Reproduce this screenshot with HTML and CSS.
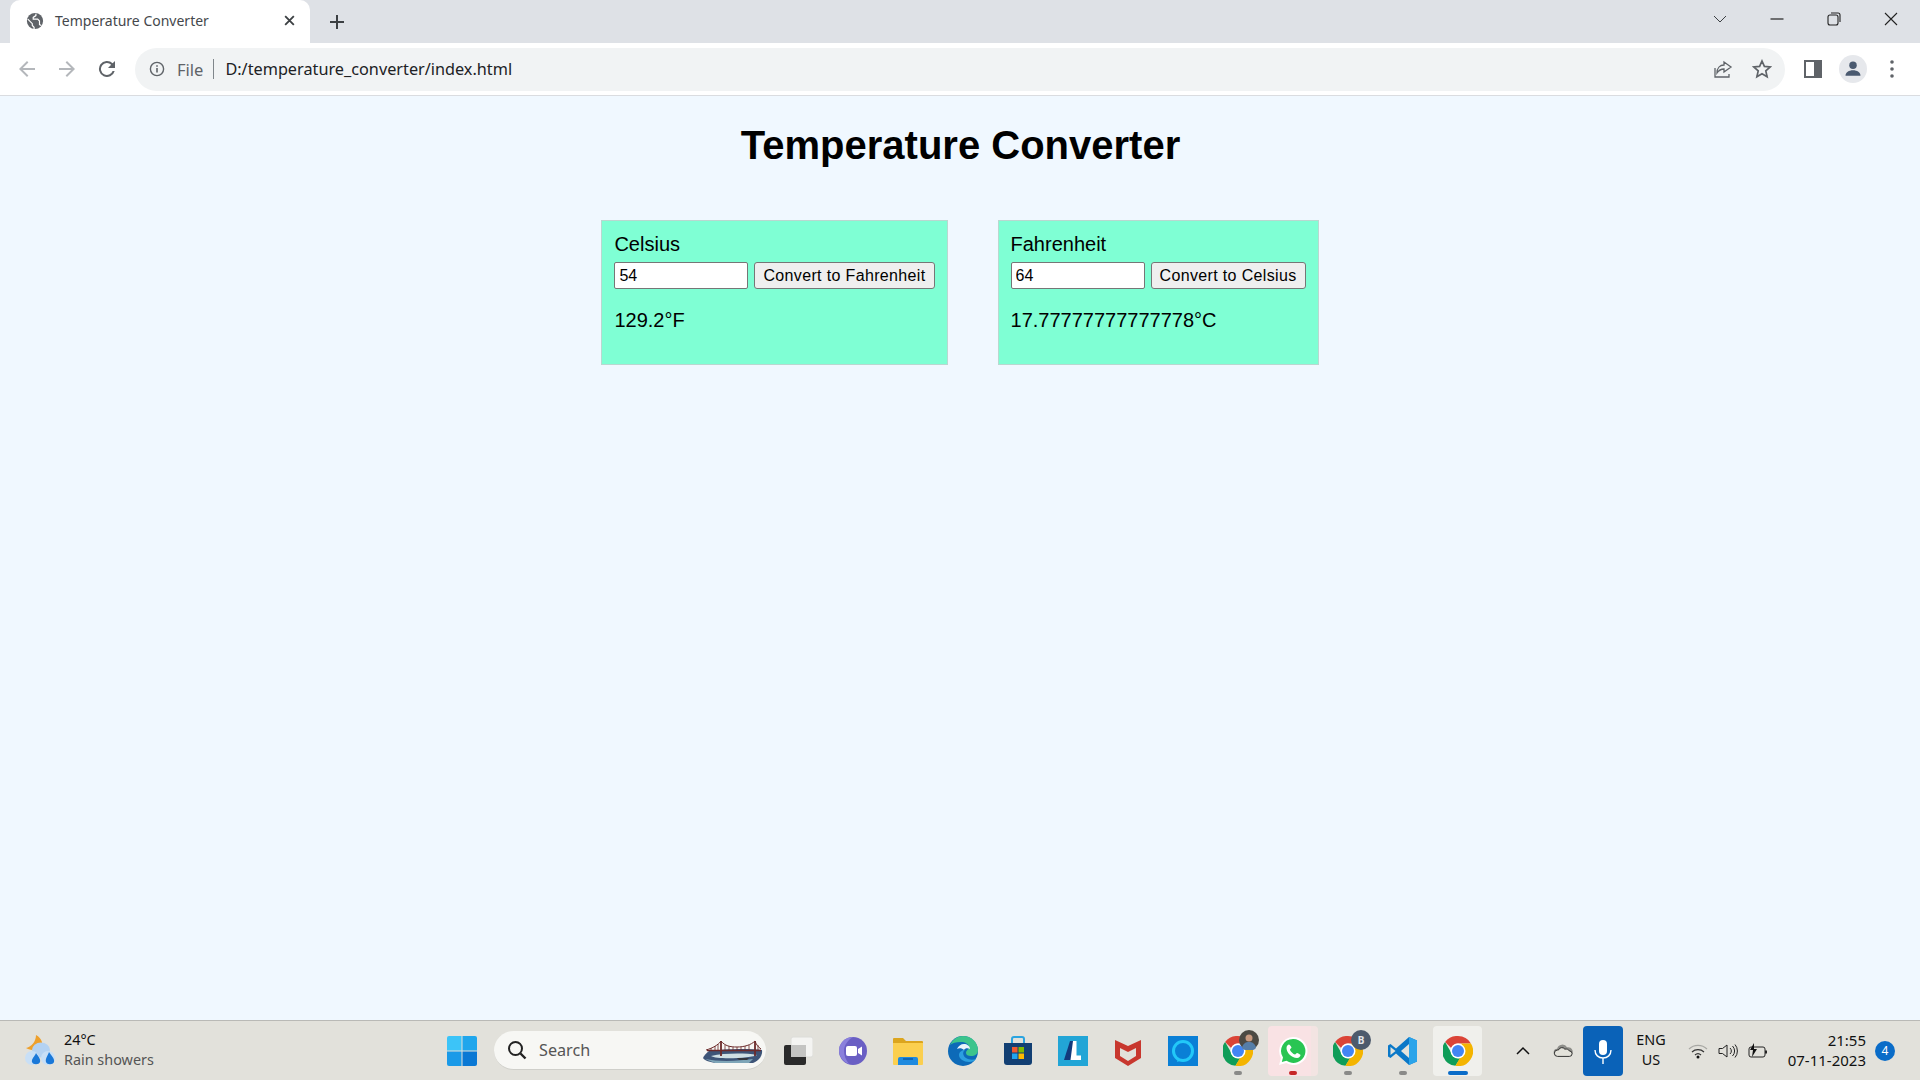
FILE: index.html
```html
<!DOCTYPE html>
<html lang="en">
  <head>
    <meta charset="UTF-8" />
    <title>Temperature Converter</title>
    <link rel="stylesheet" href="styles.css">
  </head>
  <body>
    <svg class="defs" width="0" height="0">
      <symbol id="chrome" viewBox="4 4 40 40">
        <path d="M24 4a20 20 0 0 1 17.300 10H24a10 10 0 0 0-9.200 6L6.800 12A20 20 0 0 1 24 4z" fill="#db4437"/>
        <path d="M6.800 12l8.600 15a10 10 0 0 0 11.700 6.500L20.600 43.800A20 20 0 0 1 6.800 12z" fill="#0f9d58"/>
        <path d="M41.300 14A20 20 0 0 1 20.600 43.800l8.600-15a10 10 0 0 0 .8-10.800L28 14z" fill="#f4b400"/>
        <circle cx="24" cy="24" r="10" fill="#fff"/>
        <circle cx="24" cy="24" r="8" fill="#4285f4"/>
      </symbol>
    </svg>

    <div class="tabbar">
      <div class="tab">
        <svg class="favicon" viewBox="0 0 20 20">
          <circle cx="10" cy="10" r="9" fill="#5f6368"/>
          <path d="M2 8l5 5v2l2 2v2M11 2v2L8 6v2h5l2 2v4l2 1" stroke="#fff" stroke-width="1.300" fill="none"/>
        </svg>
        <span class="tab-title">Temperature Converter</span>
        <svg class="tab-close" viewBox="0 0 12 12"><path d="M2 2l8 8M10 2l-8 8" stroke="#3c4043" stroke-width="1.700" fill="none"/></svg>
      </div>
      <svg class="new-tab" viewBox="0 0 16 16"><path d="M8 1v14M1 8h14" stroke="#3c4043" stroke-width="2" fill="none"/></svg>
      <div class="window-btns">
        <svg class="win-ico" viewBox="0 0 16 16"><path d="M2 5l6 6 6-6" stroke="#3c4043" fill="none"/></svg>
        <svg class="win-ico" viewBox="0 0 16 16"><path d="M1.500 8h13" stroke="#222" stroke-width="1.200" fill="none"/></svg>
        <svg class="win-ico" viewBox="0 0 16 16"><rect x="2" y="4" width="10" height="10" rx="2" stroke="#222" stroke-width="1.100" fill="none"/><path d="M5 2h7a2 2 0 0 1 2 2v7" stroke="#222" stroke-width="1.100" fill="none"/></svg>
        <svg class="win-ico" viewBox="0 0 16 16"><path d="M2 2l12 12M14 2L2 14" stroke="#222" stroke-width="1.100" fill="none"/></svg>
      </div>
    </div>

    <div class="toolbar">
      <svg class="nav-ico" viewBox="0 0 24 24"><path fill="#b4b7bb" d="M20 11H7.800l5.600-5.600L12 4l-8 8 8 8 1.400-1.400L7.800 13H20z"/></svg>
      <svg class="nav-ico" viewBox="0 0 24 24"><path fill="#b4b7bb" d="M4 11h12.200l-5.600-5.600L12 4l8 8-8 8-1.400-1.400 5.600-5.600H4z"/></svg>
      <svg class="nav-ico" viewBox="0 0 24 24"><path fill="#5f6368" d="M17.650 6.350A8 8 0 1 0 19.700 14h-2.100a6 6 0 1 1-1.400-6.200L13 11h7V4z"/></svg>
      <div class="omnibox">
        <svg class="info-ico" viewBox="0 0 16 16"><circle cx="8" cy="8" r="6.600" stroke="#5f6368" stroke-width="1.400" fill="none"/><path d="M8 7v4.500M8 4.300v1.500" stroke="#5f6368" stroke-width="1.600"/></svg>
        <span class="scheme">File</span>
        <span class="divider"></span>
        <span class="url">D:/temperature_converter/index.html</span>
        <svg class="omni-ico share" viewBox="0 0 20 20"><path d="M2 9v9h14v-3" stroke="#5f6368" stroke-width="1.300" fill="none"/><path d="M11 3l7 5-7 5v-3c-3 0-5 1-7 4 0-5 3-8 7-8z" stroke="#5f6368" stroke-width="1.300" fill="none"/></svg>
        <svg class="omni-ico" viewBox="0 0 20 20"><path d="M10 2l2.400 5.400 5.800.6-4.400 3.900 1.300 5.800-5.100-3-5.100 3 1.300-5.800L1.800 8l5.800-.6z" stroke="#5f6368" stroke-width="1.700" fill="none"/></svg>
      </div>
      <svg class="side-ico" viewBox="0 0 18 18"><path fill="#5f6368" d="M0 0h18v18H0z"/><path fill="#fff" d="M2 2h8v14H2z"/></svg>
      <div class="avatar">
        <svg viewBox="0 0 24 24"><circle cx="12" cy="7.500" r="4.500" fill="#4a5a70"/><path d="M3 20c0-4 4-6.500 9-6.500s9 2.500 9 6.500z" fill="#4a5a70"/></svg>
      </div>
      <svg class="menu-ico" viewBox="0 0 6 20"><circle cx="3" cy="3" r="1.800" fill="#5f6368"/><circle cx="3" cy="10" r="1.800" fill="#5f6368"/><circle cx="3" cy="17" r="1.800" fill="#5f6368"/></svg>
    </div>

    <main class="page">
      <h1>Temperature Converter</h1>
      <div class="converters">
        <div class="converter">
          <label for="celsius">Celsius</label>
          <div class="field">
            <input type="text" id="celsius" value="54" />
            <button type="button">Convert to Fahrenheit</button>
          </div>
          <p>129.2°F</p>
        </div>
        <div class="converter">
          <label for="fahrenheit">Fahrenheit</label>
          <div class="field">
            <input type="text" id="fahrenheit" value="64" />
            <button type="button">Convert to Celsius</button>
          </div>
          <p>17.77777777777778°C</p>
        </div>
      </div>
    </main>

    <footer class="taskbar">
      <div class="weather">
        <svg class="weather-ico" viewBox="0 0 30 31">
          <path d="M11 0c6 3 8 10 5 15-5 1-12 0-15-2 5-1 10-6 10-13z" fill="#eea02c"/>
          <ellipse cx="16" cy="15" rx="9" ry="7.500" fill="#b4d2f2"/>
          <circle cx="7" cy="23" r="7" fill="#c8dff6"/>
          <circle cx="23" cy="23" r="7" fill="#c8dff6"/>
          <path d="M11 18c2 3 5 6 4 9-1 3-7 3-8 0-1-3 3-6 4-9z" fill="#1a78d8"/>
          <path d="M24 17c2 3 6 7 5 10-1 3-7 3-8 0-1-3 2-7 3-10z" fill="#1a78d8"/>
        </svg>
        <div class="weather-text">
          <span class="temp">24°C</span>
          <span class="cond">Rain showers</span>
        </div>
      </div>

      <div class="slot">
        <svg class="ico" viewBox="0 0 30 30">
          <path d="M0 2a2 2 0 0 1 2-2h12.500v14.500H0z" fill="#3cc4f8"/><path d="M15.500 0H28a2 2 0 0 1 2 2v12.500H15.500z" fill="#20a6ec"/>
          <path d="M0 15.500h14.500V30H2a2 2 0 0 1-2-2z" fill="#1a9ae8"/><path d="M15.500 15.500H30V28a2 2 0 0 1-2 2H15.500z" fill="#0a78d4"/>
        </svg>
      </div>

      <div class="search">
        <svg class="search-ico" viewBox="0 0 20 20"><circle cx="8.500" cy="8.500" r="6.500" stroke="#222" stroke-width="2" fill="none"/><path d="M13.500 13.500l5 5" stroke="#222" stroke-width="2.400"/></svg>
        <span class="search-text">Search</span>
        <svg class="search-art" viewBox="0 0 60 25">
          <path d="M6 13C20 11 44 10 59 12c1 5-3 11-9 13H12C6 24 1 22 0 20c1-2 3-5 6-7z" fill="#3e5578"/>
          <path d="M8 18c14-3 34-3 46-1-4 3-40 5-46 1z" fill="#cfdfe4"/>
          <path d="M2 21c14 3 34 2 48 0l-4 4H12z" fill="#7fa6b8"/>
          <path d="M34 20h12l-2 2H36z" fill="#33363e"/>
          <path d="M4 12.500h54" stroke="#6c2a2a" stroke-width="1.300"/>
          <path d="M18 3v15M52 3v15" stroke="#6c2a2a" stroke-width="1.800"/>
          <path d="M3 12C10 10 15 7 18 3c4 5 9 6 16 6s14-2 18-6c1 3 3 6 6 8" stroke="#6c2a2a" fill="none"/>
          <path d="M8 10v3M12 8v5M15 6v7M22 7v6M26 8v5M30 9v4M34 9v4M38 9v4M42 8v5M46 7v6M55 7v6" stroke="#6c2a2a" stroke-width=".8"/>
        </svg>
      </div>

      <div class="slot">
        <svg class="ico" viewBox="0 0 30 30">
          <rect x="8" y="1" width="22" height="20" rx="2" fill="#f4f4f2" stroke="#dcdcd8"/>
          <rect x="1" y="9" width="22" height="20" rx="2" fill="#2a2a2a"/>
          <path d="M8 9h15v12H8z" fill="#c4c4c2"/>
        </svg>
      </div>
      <div class="slot">
        <svg class="ico" viewBox="0 0 30 30">
          <circle cx="15" cy="15" r="14" fill="#6a5fc4"/>
          <path d="M1 15a14 14 0 0 1 14-14c-5 3-9 8-9 14 0 5 2 9 5 13A14 14 0 0 1 1 15z" fill="#8a80dc"/>
          <rect x="8" y="10" width="11" height="10" rx="2" fill="#fff"/>
          <path d="M20 13l4-2.500v9L20 17z" fill="#fff"/>
        </svg>
      </div>
      <div class="slot">
        <svg class="ico" viewBox="0 0 30 30">
          <path d="M0 3a1 1 0 0 1 1-1h9l3 3h16a1 1 0 0 1 1 1v4H0z" fill="#dca51e"/>
          <path d="M0 7h30v21a1 1 0 0 1-1 1H1a1 1 0 0 1-1-1z" fill="#fbcf4f"/>
          <path d="M5 29v-6a2 2 0 0 1 2-2h16a2 2 0 0 1 2 2v6z" fill="#1f8adf"/>
          <path d="M10 23h10" stroke="#0c5aa6" stroke-width="1.500"/>
        </svg>
      </div>
      <div class="slot">
        <svg class="ico" viewBox="0 0 30 30">
          <circle cx="15" cy="15" r="15" fill="#0d6ab8"/>
          <path d="M2 9C5 3 10 0 15 0c8 0 15 6 15 14 0 4-3 6-7 6-3 0-5-1-5-3 0-3 3-3 3-6 0-3-4-5-8-5C8 6 4 7 2 9z" fill="#3cc48c"/>
          <path d="M11 19c0 4 5 7 10 7 3 0 6-1 7-3-3 1-7 1-10-1-3-2-4-6-1-8-3 0-6 2-6 5z" fill="#2c9fe0"/>
          <path d="M22 13c0-3-3-5-6-5s-6 2-7 5c2-1 5-1 7 1 1-2 4-2 6-1z" fill="#e8f4fa"/>
        </svg>
      </div>
      <div class="slot">
        <svg class="ico" viewBox="0 0 30 30">
          <path d="M9 7V3a2 2 0 0 1 2-2h8a2 2 0 0 1 2 2v4" stroke="#2ba4e0" stroke-width="2" fill="none"/>
          <path d="M1 7h28v19a3 3 0 0 1-3 3H4a3 3 0 0 1-3-3z" fill="#123f73"/>
          <rect x="9" y="11" width="5.500" height="5.500" fill="#f05a30"/><rect x="15.500" y="11" width="5.500" height="5.500" fill="#7fba00"/>
          <rect x="9" y="17.500" width="5.500" height="5.500" fill="#22a4ee"/><rect x="15.500" y="17.500" width="5.500" height="5.500" fill="#fdb900"/>
        </svg>
      </div>
      <div class="slot">
        <svg class="ico" viewBox="0 0 30 30">
          <rect width="30" height="30" fill="#22a5d6"/>
          <path d="M12 5h3v19H6z" fill="#123a7c"/>
          <path d="M15 5h3.500v14.500H23V24H12.500z" fill="#fff"/>
        </svg>
      </div>
      <div class="slot">
        <svg class="ico" viewBox="0 0 30 30"><path d="M2 4l13 6 13-6v18l-13 8-13-8zM7 12v8l8 5 8-5v-8l-8 4z" fill="#c8372e" fill-rule="evenodd"/></svg>
      </div>
      <div class="slot">
        <svg class="ico" viewBox="0 0 30 30">
          <rect width="30" height="30" fill="#0a7fd6"/>
          <circle cx="15" cy="15" r="9.500" stroke="#22c8f8" stroke-width="3" fill="none"/>
          <path d="M10 23l-1 3 5-2z" fill="#22c8f8"/>
        </svg>
      </div>
      <div class="slot pinned">
        <svg class="ico" viewBox="0 0 30 30"><use href="#chrome"/></svg>
        <svg class="overlay" viewBox="0 0 20 20">
          <circle cx="10" cy="10" r="10" fill="#4c4a44"/>
          <circle cx="10" cy="8" r="3.500" fill="#c89a80"/>
          <path d="M3 18c1-5 4-6 7-6s6 1 7 6a10 10 0 0 1-14 0z" fill="#567ea8"/>
        </svg>
      </div>
      <div class="slot whatsapp">
        <svg class="ico" viewBox="0 0 30 30">
          <path d="M15 1a14 14 0 0 0-12 21L1 29l7.300-2A14 14 0 1 0 15 1z" fill="#fff"/>
          <path d="M15 3a12 12 0 0 0-10 18.500L3.800 26l4.700-1.200A12 12 0 1 0 15 3z" fill="#29c553"/>
          <path d="M11 8.500c-1 0-2.500 1.500-2.500 3.500 0 4.500 5 10 10.500 10 2 0 3.500-1.500 3.500-3 0-.5-3-2-3.500-2s-1.500 1.500-2 1.500c-1.500 0-5-3.500-5-5 0-.5 1.500-1.500 1.500-2S11.500 8.500 11 8.500z" fill="#fff"/>
        </svg>
        <span class="run-dot red"></span>
      </div>
      <div class="slot pinned">
        <svg class="ico" viewBox="0 0 30 30"><use href="#chrome"/></svg>
        <span class="profile-b">B</span>
      </div>
      <div class="slot pinned">
        <svg class="ico" viewBox="0 0 30 30">
          <path d="M21 1l8 3.500v21L21 29 8 17.500 2.500 22 0 20.500v-11L2.500 8 8 12.500z" fill="#0a78c8"/>
          <path d="M21 1l8 3.500v21L21 29z" fill="#2ba4ea"/>
          <path d="M21 8l-8 7 8 7z" fill="#e3e3dc"/>
          <path d="M2.500 11l5 4-5 4z" fill="#e3e3dc"/>
        </svg>
      </div>
      <div class="slot active">
        <svg class="ico" viewBox="0 0 30 30"><use href="#chrome"/></svg>
        <span class="run-dot blue"></span>
      </div>

      <div class="tray">
        <svg class="tray-chev" viewBox="0 0 14 10"><path d="M1 8l6-6 6 6" stroke="#111" stroke-width="1.500" fill="none"/></svg>
        <svg class="tray-cloud" viewBox="0 0 22 16">
          <path d="M5 14a4 4 0 0 1-.5-8 6 6 0 0 1 11-1.500A4.500 4.500 0 0 1 18 14z" fill="#8e8e8a"/>
          <path d="M5 14.500a3.500 3.500 0 0 1 0-7h1a4 4 0 0 1 7-1 4 4 0 0 1 5 2 3 3 0 0 1 0 6z" fill="#e3e2da" stroke="#222" stroke-width="1"/>
        </svg>
        <div class="mic">
          <svg viewBox="0 0 20 26"><rect x="6" y="1" width="8" height="15" rx="4" fill="#fff"/><path d="M2 11c0 5 3.500 8 8 8s8-3 8-8M10 19v6" stroke="#fff" stroke-width="1.400" fill="none"/></svg>
        </div>
        <div class="lang"><span>ENG</span><span>US</span></div>
        <div class="status-icons">
          <svg class="status-ico" viewBox="0 0 20 16">
            <path d="M1 6a13 13 0 0 1 18 0" stroke="#a8a8a4" stroke-width="1.200" fill="none"/>
            <path d="M4 9a9 9 0 0 1 12 0M7 12a4.500 4.500 0 0 1 6 0" stroke="#333" stroke-width="1.200" fill="none"/>
            <circle cx="10" cy="14" r="1.500" fill="#111"/>
          </svg>
          <svg class="status-ico" viewBox="0 0 20 16">
            <path d="M1 5.500h3.500L9 2v12L4.500 10.500H1z" stroke="#222" fill="none"/>
            <path d="M12 5a4 4 0 0 1 0 6M14.500 3a7 7 0 0 1 0 10M17 1.500a10 10 0 0 1 0 13" stroke="#222" fill="none"/>
          </svg>
          <svg class="status-ico" viewBox="0 0 20 16">
            <rect x="1" y="4" width="16" height="10" rx="2" stroke="#222" fill="none"/>
            <rect x="17" y="7.500" width="2" height="3" fill="#222"/>
            <path d="M6 0L2 7h3l-1 7 5-8H6z" fill="#111"/>
          </svg>
        </div>
        <div class="clock"><span>21:55</span><span>07-11-2023</span></div>
        <span class="badge">4</span>
      </div>
    </footer>
  </body>
</html>
```

FILE: styles.css
```css
* {
  box-sizing: border-box;
  margin: 0;
  padding: 0;
}

html,
body {
  height: 100%;
  overflow: hidden;
}

body {
  display: flex;
  flex-direction: column;
  font-family: "Liberation Sans", Arial, sans-serif;
  background-color: #f0f8ff;
  color: #000;
}

.defs {
  position: absolute;
}

svg {
  display: block;
  flex: none;
}

/* browser chrome */
.tabbar {
  height: 43px;
  flex: none;
  display: flex;
  align-items: center;
  padding-left: 10px;
  background-color: #dee1e6;
  font-family: "Noto Sans", sans-serif;
}

.tab {
  width: 300px;
  height: 43px;
  display: flex;
  align-items: center;
  padding: 0 14px 2px 15px;
  background-color: #fff;
  border-radius: 10px 10px 0 0;
}

.favicon {
  width: 18px;
  height: 18px;
  margin-left: 1px;
}

.tab-title {
  flex: 1;
  margin-left: 11px;
  font-size: 14px;
  color: #45484c;
}

.tab-close {
  width: 13px;
  height: 13px;
}

.new-tab {
  width: 16px;
  height: 16px;
  margin-left: 19px;
}

.window-btns {
  margin-left: auto;
  display: flex;
  gap: 41px;
  padding: 0 21px 6px 0;
}

.win-ico {
  width: 16px;
  height: 16px;
}

.toolbar {
  height: 53px;
  flex: none;
  display: flex;
  align-items: center;
  padding-left: 15px;
  background-color: #fff;
  border-bottom: 1px solid #dadce0;
}

.nav-ico {
  width: 24px;
  height: 24px;
  margin-right: 16px;
}

.omnibox {
  width: 1650px;
  height: 43px;
  display: flex;
  align-items: center;
  padding-left: 14px;
  background-color: #f1f3f4;
  border-radius: 22px;
  font-family: "Noto Sans", sans-serif;
  margin-right: 19px;
}

.info-ico {
  width: 16px;
  height: 16px;
}

.scheme {
  margin-left: 12px;
  font-size: 16.5px;
  color: #5f6368;
}

.divider {
  width: 1px;
  height: 20px;
  margin: 0 11px 0 10px;
  background-color: #80868b;
}

.url {
  flex: 1;
  font-size: 16.25px;
  color: #202124;
}

.omni-ico {
  width: 20px;
  height: 20px;
  margin-right: 13px;
}

.omni-ico.share {
  margin-right: 19px;
}

.side-ico {
  width: 18px;
  height: 18px;
}

.avatar {
  width: 28px;
  height: 28px;
  margin-left: 17px;
  padding: 4px;
  background-color: #e6e8ec;
  border-radius: 50%;
}

.menu-ico {
  width: 6px;
  height: 20px;
  margin-left: 22px;
}

/* page */
.page {
  flex: 1;
  padding-top: 26px;
  text-align: center;
}

h1 {
  font-size: 40px;
  line-height: 46px;
  font-weight: bold;
  padding-left: 1px;
  margin-bottom: 52px;
}

.converters {
  display: flex;
  justify-content: center;
  gap: 50px;
  text-align: left;
}

.converter {
  padding: 12px;
  background-color: #7fffd4;
  border: 1px solid #b9d8d0;
  font-size: 20px;
}

.converter label {
  display: block;
  line-height: 23px;
  margin-bottom: 6px;
}

.field {
  display: flex;
  gap: 6px;
}

.field input {
  width: 134px;
  height: 27px;
  padding: 1px 4px;
  font: 16px "Liberation Sans", Arial, sans-serif;
  border: 1px solid #767676;
  border-radius: 2px;
  background-color: #fff;
}

.field button {
  height: 27px;
  padding: 0 8px;
  font: 16px "Liberation Sans", Arial, sans-serif;
  letter-spacing: 0.35px;
  border: 1px solid #767676;
  border-radius: 3px;
  background-color: #efefef;
  color: #000;
  white-space: nowrap;
}

.converter p {
  margin-top: 20px;
  line-height: 23px;
  margin-bottom: 20px;
}

/* taskbar */
.taskbar {
  height: 60px;
  flex: none;
  display: flex;
  align-items: center;
  background-color: #e2e1db;
  border-top: 1px solid #b9b9b6;
  font-family: "Noto Sans", sans-serif;
  font-size: 14.4px;
  color: #111;
}

.weather {
  width: 434px;
  display: flex;
  align-items: center;
  gap: 9px;
  padding-left: 25px;
}

.weather-ico {
  width: 30px;
  height: 31px;
}

.weather-text {
  display: flex;
  flex-direction: column;
  line-height: 20px;
  padding-bottom: 2px;
}

.cond {
  color: #555;
}

.slot {
  width: 55px;
  height: 50px;
  flex: none;
  position: relative;
  display: flex;
  align-items: center;
  justify-content: center;
  border-radius: 4px;
}

.ico {
  width: 30px;
  height: 30px;
}

.search {
  width: 272px;
  height: 39px;
  margin: 0 4px 0 5px;
  display: flex;
  align-items: center;
  padding: 0 3px 0 13px;
  background-color: #f7f7f4;
  border-radius: 20px;
  border-bottom: 1px solid #cfcfca;
}

.search-ico {
  width: 20px;
  height: 20px;
}

.search-text {
  flex: 1;
  margin-left: 12px;
  font-size: 16.2px;
  color: #555;
}

.search-art {
  width: 60px;
  height: 25px;
}

.overlay {
  position: absolute;
  top: 4px;
  right: 6px;
  width: 20px;
  height: 20px;
}

.profile-b {
  position: absolute;
  top: 4px;
  right: 4px;
  width: 20px;
  height: 20px;
  display: flex;
  align-items: center;
  justify-content: center;
  border-radius: 50%;
  background-color: #4d5a6c;
  color: #e4e6ea;
  font-size: 10px;
  font-weight: bold;
}

/* running app marks */
.pinned::after {
  content: "";
  position: absolute;
  left: 24px;
  bottom: 1px;
  width: 8px;
  height: 4px;
  border-radius: 2px;
  background-color: #8a8a88;
}

.whatsapp {
  width: 50px;
  margin: 0 2px 0 3px;
  background: linear-gradient(to right, #f9e2e4 86%, #f3e4e2 86%);
}

.active {
  width: 49px;
  margin: 0 3px;
  background-color: #f0f0ec;
}

.run-dot {
  position: absolute;
  bottom: 1px;
  height: 4px;
  border-radius: 2px;
}

.run-dot.red {
  left: 21px;
  width: 8px;
  background-color: #c62828;
}

.run-dot.blue {
  left: 15px;
  width: 20px;
  background-color: #0a6cc8;
}

.tray {
  flex: 1;
  display: flex;
  align-items: center;
  padding-left: 31px;
}

.tray-chev {
  width: 14px;
  height: 10px;
}

.tray-cloud {
  width: 20px;
  height: 15px;
  margin-left: 23px;
}

.mic {
  width: 40px;
  height: 50px;
  margin-left: 10px;
  padding: 13px 10px;
  background-color: #0a62b8;
  border-radius: 4px;
}

.lang {
  width: 56px;
  display: flex;
  flex-direction: column;
  align-items: center;
  line-height: 20px;
  padding-bottom: 2px;
}

.status-icons {
  display: flex;
  gap: 10px;
  margin-left: 9px;
}

.status-ico {
  width: 20px;
  height: 16px;
}

.clock {
  width: 98px;
  display: flex;
  flex-direction: column;
  align-items: flex-end;
  font-size: 15px;
  line-height: 20px;
  padding-bottom: 2px;
}

.badge {
  width: 20px;
  height: 20px;
  margin-left: 9px;
  display: flex;
  align-items: center;
  justify-content: center;
  border-radius: 50%;
  background-color: #0a6cc8;
  color: #fff;
  font-size: 12px;
}
```
